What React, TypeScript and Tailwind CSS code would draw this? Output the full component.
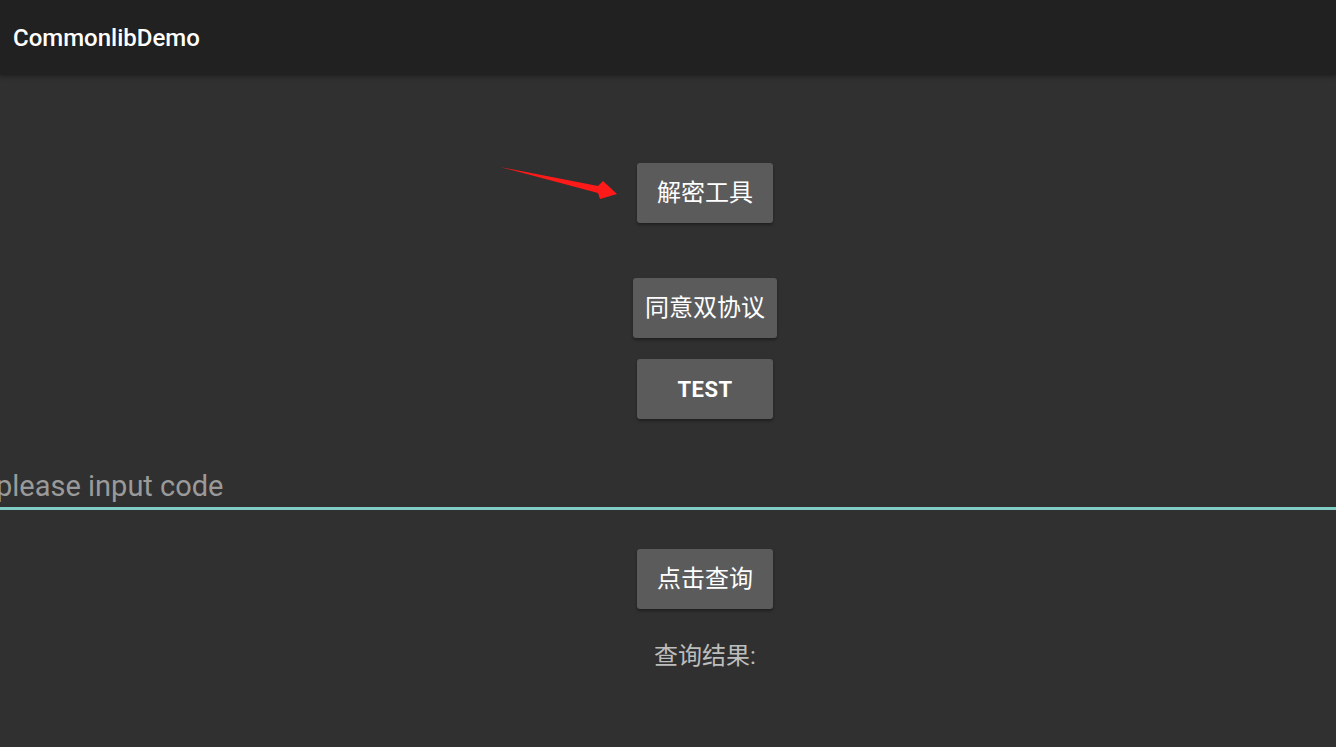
import React from "react"

const cjk = "font-['Roboto','Noto_Sans_CJK_SC',sans-serif]"

function DemoButton({ label, bold }: { label: string; bold?: boolean }) {
  return (
    <button
      className={`h-[60px] min-w-[136px] px-[12px] rounded-[3px] bg-[#5b5b5c] text-white shadow-[0_2px_3px_rgba(0,0,0,0.35)] ${cjk} ${
        bold ? "text-[22px] font-bold tracking-[0.5px]" : "text-[24px]"
      }`}
    >
      {label}
    </button>
  )
}

// the content column sits a bit right of the window centre
function Row({ children, className = "" }: { children: React.ReactNode; className?: string }) {
  return <div className={`flex w-full justify-center pl-[74px] ${className}`}>{children}</div>
}

export default function App() {
  return (
    <div className="relative h-[747px] w-[1336px] overflow-hidden bg-[#303030]">
      {/* Toolbar */}
      <div className="relative z-10 flex h-[75px] items-center bg-[#212121] px-[13px] shadow-[0_2px_4px_rgba(0,0,0,0.3)]">
        <h1 className="font-['Roboto',sans-serif] text-[24px] font-medium text-white">CommonlibDemo</h1>
      </div>

      <div className="flex flex-col items-center">
        <Row className="mt-[88px]">
          <DemoButton label="解密工具" />
        </Row>
        <Row className="mt-[55px]">
          <DemoButton label="同意双协议" />
        </Row>
        <Row className="mt-[21px]">
          <DemoButton label="TEST" bold />
        </Row>

        {/* Code input */}
        <div className="mt-[47px] w-full border-b-[3px] border-[#80cbc4]">
          <input
            placeholder="please input code"
            className="h-[41px] w-full bg-transparent indent-[-4px] font-['Roboto',sans-serif] text-[29px] text-white outline-none placeholder:text-[#9a9a9a]"
          />
        </div>

        <Row className="mt-[39px]">
          <DemoButton label="点击查询" />
        </Row>
        <Row className="mt-[29px]">
          <p className={`text-[24px] text-[#bdbdbd] ${cjk}`}>查询结果:</p>
        </Row>
      </div>

      {/* Annotation arrow */}
      <svg className="absolute left-0 top-0" width="1336" height="747" viewBox="0 0 1336 747">
        <polygon points="500,167 598,186 603,181 617,194 600,199 598,193" fill="#ff1a1a" />
      </svg>
    </div>
  )
}
